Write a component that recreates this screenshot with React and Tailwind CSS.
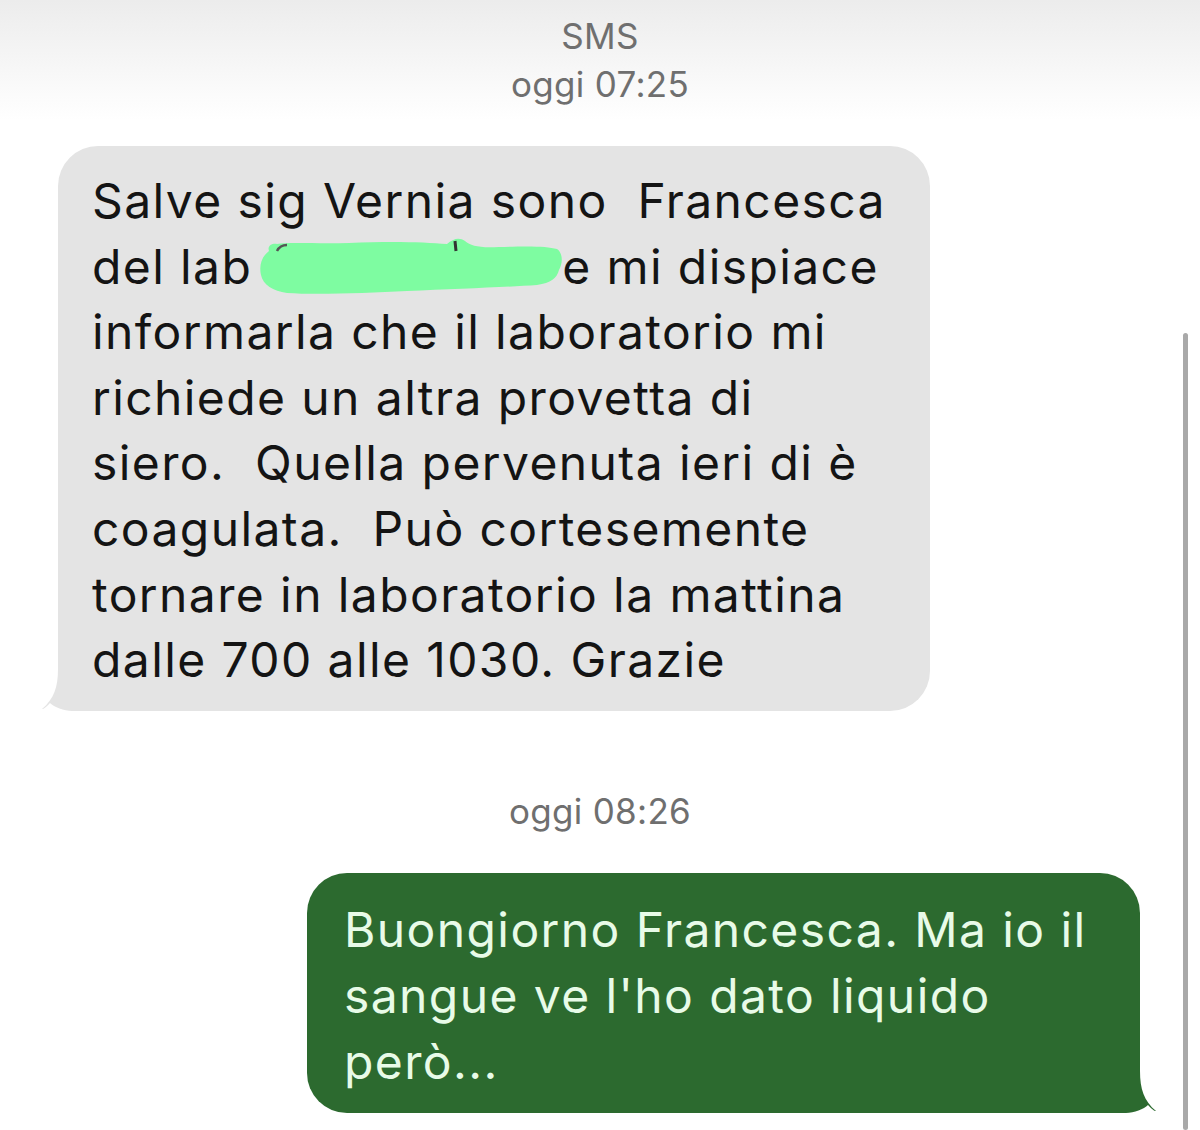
export default function App() {
  const font = { fontFamily: 'Inter, "Noto Sans", "Liberation Sans", sans-serif' };
  return (
    <div
      className="relative w-[1200px] h-[1130px] overflow-hidden bg-white"
      style={font}
    >
      <div className="absolute inset-x-0 top-0 h-[120px] bg-gradient-to-b from-[#ececec] to-white" />
      <div className="relative flex flex-col">
        <div className="flex flex-col items-center pt-[12px] text-[35px] leading-[48px] text-[#6f6f6f] tracking-[0.3px]">
          <div>SMS</div>
          <div>oggi 07:25</div>
        </div>

        <div className="relative ml-[58px] mt-[38px] w-[872px] rounded-[40px] bg-[#e4e4e4] pl-[34px] pr-[10px] pt-[22px] pb-[18px] text-[48px] leading-[65.6px] text-[#141414] tracking-[1.4px]">
          <svg className="absolute left-[-16px] bottom-0" width="60" height="42" viewBox="0 0 60 42">
            <path d="M60 0 L60 42 L30 42 C22 42 12 38 8 34 C4 38 2 40 0 40 C12 30 16 18 16 0 Z" fill="#e4e4e4" />
          </svg>
          <div className="relative whitespace-pre">
            Salve sig Vernia sono  Francesca
            <br />
            del lab{" "}
            <span className="relative inline-block w-[295px] h-[10px]">
              <svg className="absolute left-[-12px] top-[-37px]" width="312" height="62" viewBox="0 0 312 62">
                <path d="M14 14 C12 9 17 6 22 7 C34 5 64 7 94 6 C134 4 170 5 192 7 C198 2 204 0 210 4 C216 9 224 11 244 10 C272 9 292 9 302 12 C308 16 308 26 304 33 C302 41 296 46 282 48 C252 50 202 52 152 54 C112 56 62 58 32 56 C18 54 8 48 6 38 C4 29 6 20 14 14 Z" fill="#7efca1" />
                <path d="M200 4 L201 14" stroke="#333" strokeWidth="3" />
                <path d="M22 14 C24 10 28 8 32 8" stroke="#555" strokeWidth="2.5" fill="none" />
              </svg>
            </span>
            e mi dispiace
            <br />
            informarla che il laboratorio mi
            <br />
            richiede un altra provetta di
            <br />
            siero.  Quella pervenuta ieri di è
            <br />
            coagulata.  Può cortesemente
            <br />
            tornare in laboratorio la mattina
            <br />
            dalle 700 alle 1030. Grazie
          </div>
        </div>

        <div className="mt-[76px] text-center text-[35px] leading-[48px] text-[#6f6f6f] tracking-[0.3px]">
          oggi 08:26
        </div>

        <div className="relative ml-[307px] mt-[38px] w-[833px] rounded-[40px] bg-[#2c6a2f] pl-[37px] pr-[10px] pt-[24px] pb-[18px] text-[48px] leading-[66px] text-[#e8fbe8] tracking-[1.4px]">
          <svg className="absolute right-[-16px] bottom-0" width="60" height="42" viewBox="0 0 60 42">
            <path d="M0 0 L0 42 L30 42 C38 42 48 38 52 34 C56 38 58 40 60 40 C48 30 44 18 44 0 Z" fill="#2c6a2f" />
          </svg>
          <div className="relative whitespace-pre">
            Buongiorno Francesca. Ma io il
            <br />
            sangue ve l'ho dato liquido
            <br />
            però...
          </div>
        </div>
      </div>

      <div className="absolute left-[1183px] top-[333px] bottom-0 w-[5px] rounded-full bg-[#a9a9a9]" />
    </div>
  );
}
